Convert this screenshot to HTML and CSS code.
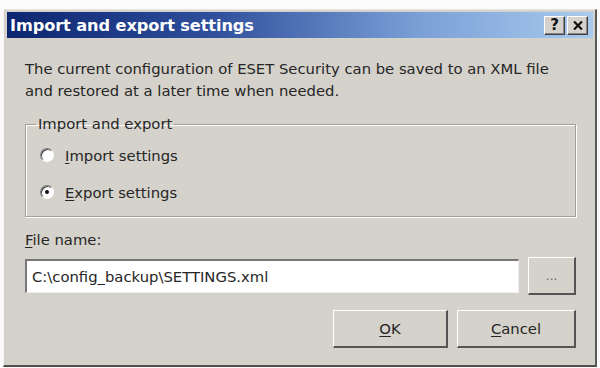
FILE: index.html
```html
<!DOCTYPE html>
<html>
<head>
<meta charset="utf-8">
<link rel="stylesheet" href="styles.css">
</head>
<body>
<div class="window">
  <div class="titlebar">
    <span class="title">Import and export settings</span>
    <div class="tbtns">
      <span class="tbtn help">?</span>
      <span class="tbtn close"><svg width="10" height="9" viewBox="0 0 10 9"><path d="M1 0.5 L9 8.5 M9 0.5 L1 8.5" stroke="#111" stroke-width="2.2" fill="none"/></svg></span>
    </div>
  </div>
  <div class="content">
    <p class="desc">The current configuration of ESET Security can be saved to an XML file<br>and restored at a later time when needed.</p>
    <fieldset class="group">
      <legend>Import and export</legend>
      <label class="radio"><span class="dot"></span><span><u>I</u>mport settings</span></label>
      <label class="radio"><span class="dot checked"></span><span><u>E</u>xport settings</span></label>
    </fieldset>
    <div class="flabel"><u>F</u>ile name:</div>
    <div class="filerow">
      <div class="input">C:\config_backup\SETTINGS.xml</div>
      <div class="btn browse">...</div>
    </div>
    <div class="actions">
      <div class="btn ok"><u>O</u>K</div>
      <div class="btn cancel"><u>C</u>ancel</div>
    </div>
  </div>
</div>
</body>
</html>
```
FILE: styles.css
```css
html, body { margin: 0; padding: 0; background: #fbfbfb; }
body { width: 600px; height: 368px; overflow: hidden; font-family: "DejaVu Sans", Verdana, sans-serif; }
.window {
  margin: 9px 0 0 3px;
  width: 594px;
  height: 358px;
  box-sizing: border-box;
  background: #d5d2cc;
  border-top: 1px solid #e8e6e2;
  border-left: 1px solid #f4f3f0;
  border-right: 2px solid #5a5a58;
  border-bottom: 2px solid #4e4e4c;
  padding: 2px 2px 0 3px;
}
.titlebar {
  height: 26px;
  background: linear-gradient(90deg, #0c2570 0%, #2f4f9c 35%, #7a9fd6 70%, #a9cbee 100%);
  display: flex;
  align-items: center;
  justify-content: space-between;
  padding: 0 5px 0 3px;
}
.title { color: #fff; font-weight: bold; font-size: 16.2px; letter-spacing: -0.1px; }
.tbtns { display: flex; gap: 2px; }
.tbtn {
  width: 21px; height: 19px; box-sizing: border-box;
  background: #d5d2cc;
  border-top: 1px solid #fff; border-left: 1px solid #fff;
  border-right: 1px solid #404040; border-bottom: 1px solid #404040;
  box-shadow: inset -1px -1px 0 #888;
  display: flex; align-items: center; justify-content: center;
  font-weight: bold; font-size: 15px; color: #111;
}
.content { padding: 20px 17px 0 18px; color: #262626; font-size: 14.8px; }
.desc { margin: 0; line-height: 22px; }
.group {
  margin: 13px 0 0 0;
  padding: 7px 0 9px 14px;
  border: 1px solid #a29f99;
  box-shadow: inset 1px 1px 0 #fff, 1px 1px 0 #fff;
}
.group legend { padding: 0 2px; margin-left: -4px; line-height: 18px; }
.radio { display: flex; align-items: center; gap: 11px; height: 30px; }
.radio + .radio { margin-top: 7px; }
.dot {
  width: 12px; height: 12px; border-radius: 50%;
  background: #fff;
  border: 1px solid;
  border-color: #808080 #fff #fff #808080;
  box-shadow: inset 1px 1px 0 #404040;
  position: relative;
}
.dot.checked::after {
  content: ""; position: absolute; left: 4px; top: 4px; width: 4px; height: 4px; border-radius: 50%; background: #111;
}
.flabel { margin-top: 14px; line-height: 18px; }
.filerow { display: flex; gap: 9px; margin-top: 8px; align-items: center; }
.input {
  width: 495px; height: 34px; box-sizing: border-box;
  background: #fff;
  border-top: 2px solid #777; border-left: 2px solid #777;
  border-right: 1px solid #eee; border-bottom: 1px solid #eee;
  padding: 0 5px; display: flex; align-items: center;
}
.btn {
  box-sizing: border-box; height: 38px;
  background: #d5d2cc;
  border-top: 1px solid #fff; border-left: 1px solid #fff;
  border-right: 2px solid #555; border-bottom: 2px solid #555;
  display: flex; align-items: center; justify-content: center;
}
.browse { width: 48px; color: #666; font-size: 12px; }
.actions { display: flex; justify-content: flex-end; gap: 9px; margin-top: 15px; }
.ok { width: 115px; }
.cancel { width: 119px; }
u { text-decoration-thickness: 1px; text-underline-offset: 2px; }
```
